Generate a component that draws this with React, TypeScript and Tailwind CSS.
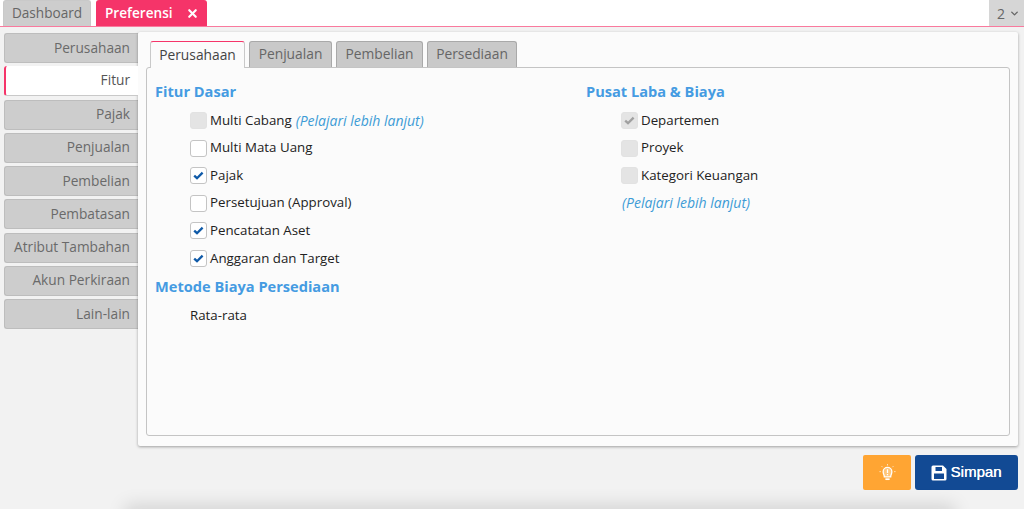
import { ChevronDown, X } from 'lucide-react';

const sideTabs = ['Perusahaan', 'Fitur', 'Pajak', 'Penjualan', 'Pembelian', 'Pembatasan', 'Atribut Tambahan', 'Akun Perkiraan', 'Lain-lain'];
const innerTabs = ['Perusahaan', 'Penjualan', 'Pembelian', 'Persediaan'];

type BoxState = 'off' | 'on' | 'disabled' | 'disabled-on';

function CheckMark({ color }: { color: string }) {
  return (
    <svg width="11" height="9" viewBox="0 0 11 9" fill="none">
      <path d="M1.2 4.6 L4 7.2 L9.6 1.6" stroke={color} strokeWidth="2.3" />
    </svg>
  );
}

function CheckRow({ state, label, link }: { state: BoxState; label: string; link?: boolean }) {
  const disabled = state === 'disabled' || state === 'disabled-on';
  return (
    <div className="flex h-[27.6px] items-center">
      <span
        className={`flex h-[17px] w-[17px] items-center justify-center rounded-[3px] border ${
          disabled ? 'border-[#e2e2e2] bg-[#e4e4e4]' : 'border-[#c4c4c4] bg-white'
        }`}
      >
        {state === 'on' && <CheckMark color="#0f5aa8" />}
        {state === 'disabled-on' && <CheckMark color="#a0a0a0" />}
      </span>
      <span className="ml-[3px] text-[#222]">{label}</span>
      {link && <span className="ml-[4px] text-[14px] text-[#3d9bd6] italic">(Pelajari lebih lanjut)</span>}
    </div>
  );
}

export default function App() {
  return (
    <div className="relative h-[509px] w-[1024px] overflow-hidden bg-[#f2f2f2] text-[13.3px] font-['Open_Sans',sans-serif]">
      {/* top tab bar */}
      <div className="flex h-[27px] items-end justify-between border-b-[1.5px] border-[#f97a9e] bg-white pl-[3px]">
        <div className="flex h-[26px] gap-[5px]">
          <div className="flex w-[88px] items-center justify-center rounded-t-[3px] border border-b-0 border-[#c9c9c9] bg-[#cdcdcd] text-[13.6px] text-[#666]">
            Dashboard
          </div>
          <div className="flex w-[111px] items-center justify-between rounded-t-[3px] bg-[#f53469] pl-[9px] pr-[8px] text-[13.6px] font-semibold text-white">
            Preferensi
            <X size={13} strokeWidth={4} />
          </div>
        </div>
        <div className="flex h-[26px] w-[35px] items-center justify-end gap-[4px] bg-[#d6d6d6] pr-[4px] text-[14px] text-[#666]">
          2
          <ChevronDown size={11} strokeWidth={3} />
        </div>
      </div>

      <div className="flex pl-[4px] pt-[5px]">
        {/* side tabs */}
        <div className="flex w-[134px] flex-col gap-[3.25px] pt-[1px] text-[13.7px]">
          {sideTabs.map((t) =>
            t === 'Fitur' ? (
              <div
                key={t}
                className="z-10 flex h-[30px] w-[134px] items-center justify-end rounded-l-[3px] border-b border-l-2 border-b-[#c9c9c9] border-l-[#f53469] bg-white pr-[8px] text-[#555]"
              >
                {t}
              </div>
            ) : (
              <div
                key={t}
                className="flex h-[30px] items-center justify-end rounded-l-[3px] border border-r-0 border-[#bdbdbd] bg-[#cdcdcd] pr-[8px] text-[#6a6a6a]"
              >
                {t}
              </div>
            ),
          )}
        </div>

        {/* main panel */}
        <div className="flex h-[414px] w-[880px] flex-col rounded-[2px] bg-[#fbfbfb] px-[8px] pb-[10px] pt-[9px] shadow-[0_1px_3px_rgba(0,0,0,0.35)]">
          <div className="z-10 -mb-px flex gap-[4px] pl-[4px] text-[13.8px]">
            {innerTabs.map((t, i) =>
              i === 0 ? (
                <div
                  key={t}
                  className="flex h-[27px] w-[95px] items-center justify-center rounded-t-[3px] border border-b-0 border-[#c9c9c9] border-t-[#f53469] bg-[#fbfbfb] text-[#444]"
                >
                  {t}
                </div>
              ) : (
                <div
                  key={t}
                  className={`flex h-[26px] items-center justify-center rounded-t-[3px] border border-b-0 border-[#a9a9a9] bg-[#c9c9c9] text-[#666] ${
                    i === 1 ? 'w-[83px]' : i === 2 ? 'w-[87px]' : 'w-[90px]'
                  }`}
                >
                  {t}
                </div>
              ),
            )}
          </div>

          <div className="flex min-h-0 flex-1 rounded-[3px] border border-[#c4c4c4] bg-[#fbfbfb] pl-[8px] pt-[12px]">
            {/* left column */}
            <div className="w-[431px]">
              <div className="text-[14.6px] leading-[22px] font-bold text-[#459be2]">Fitur Dasar</div>
              <div className="pl-[35px] pt-[4.8px]">
                <CheckRow state="disabled" label="Multi Cabang" link />
                <CheckRow state="off" label="Multi Mata Uang" />
                <CheckRow state="on" label="Pajak" />
                <CheckRow state="off" label="Persetujuan (Approval)" />
                <CheckRow state="on" label="Pencatatan Aset" />
                <CheckRow state="on" label="Anggaran dan Target" />
              </div>
              <div className="pt-[2.2px] text-[14.6px] leading-[22px] font-bold text-[#459be2]">Metode Biaya Persediaan</div>
              <div className="pl-[35px] pt-[9px] text-[#222]">Rata-rata</div>
            </div>

            {/* right column */}
            <div>
              <div className="text-[14.6px] leading-[22px] font-bold text-[#459be2]">Pusat Laba &amp; Biaya</div>
              <div className="pl-[35px] pt-[4.8px]">
                <CheckRow state="disabled-on" label="Departemen" />
                <CheckRow state="disabled" label="Proyek" />
                <CheckRow state="disabled" label="Kategori Keuangan" />
                <div className="flex h-[25.6px] items-center pl-[1px] text-[14px] text-[#3d9bd6] italic">(Pelajari lebih lanjut)</div>
              </div>
            </div>
          </div>
        </div>
      </div>

      {/* action buttons */}
      <div className="mr-[6px] mt-[9px] flex justify-end gap-[4px]">
        <div className="flex h-[35px] w-[48px] items-center justify-center rounded-[2px] bg-[#ffa533]">
          <svg width="17" height="17" viewBox="0 0 16 16" fill="none" stroke="#fff">
            <path d="M5 12.2 C5 9.8 3.9 9.4 3.9 7.3 A4.1 4.1 0 0 1 12.1 7.3 C12.1 9.4 11 9.8 11 12.2 Z" strokeWidth="1.2" fill="#ffc67a" />
            <path d="M6 14.3 H10" strokeWidth="1.6" />
            <path d="M8 5 V8.4 M8 9.4 V10.6" strokeWidth="1.2" />
            <path d="M8 0 V1.4 M2.4 2 L3.4 3 M13.6 2 L12.6 3 M0.4 7.2 H1.8 M14.2 7.2 H15.6" strokeWidth="0.9" opacity="0.7" />
          </svg>
        </div>
        <div className="flex h-[35px] w-[103px] items-center justify-center gap-[4px] rounded-[3px] bg-[#124a94] pr-[1px] text-[15px] font-['Liberation_Sans',sans-serif] text-white">
          <svg width="16" height="16" viewBox="0 0 16 16" fill="#fff">
            <path
              fillRule="evenodd"
              d="M2 0.5 H12 L15.5 4 V14 A1.5 1.5 0 0 1 14 15.5 H2 A1.5 1.5 0 0 1 0.5 14 V2 A1.5 1.5 0 0 1 2 0.5 Z M4.5 2 V6 H11 V2 Z M3 8.5 V14 H13 V8.5 Z"
            />
          </svg>
          <span className="[text-shadow:0.3px_0_0_#fff]">Simpan</span>
        </div>
      </div>

      {/* soft shadow along the page bottom */}
      <div className="absolute bottom-[-24px] left-[125px] h-[24px] w-[830px] shadow-[0_-4px_18px_rgba(0,0,0,0.13)]" />
    </div>
  );
}
